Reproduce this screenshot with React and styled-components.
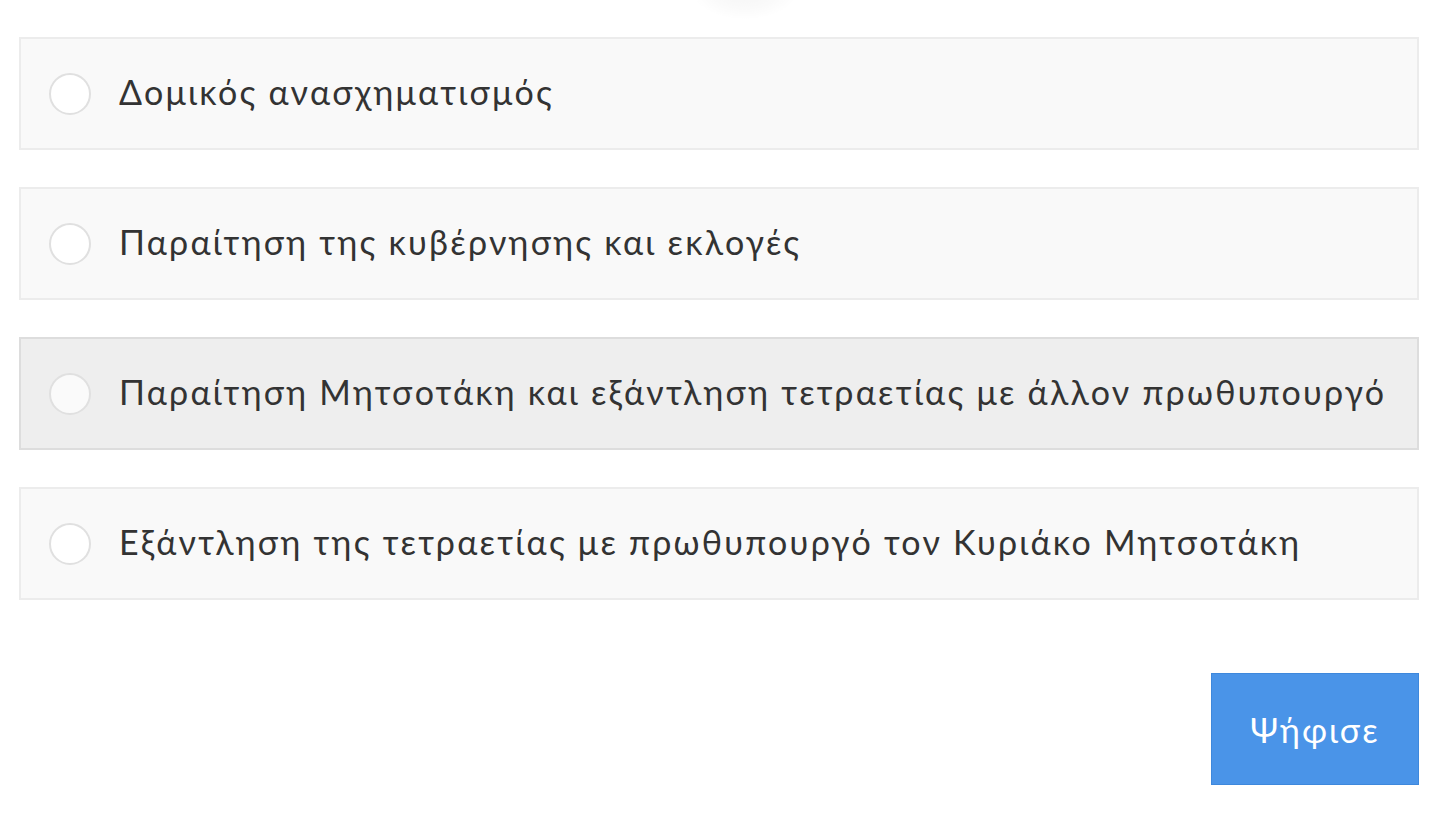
import styled, { createGlobalStyle } from "styled-components";

const GlobalStyle = createGlobalStyle`
  html, body {
    margin: 0;
    padding: 0;
    background: #fff;
  }
  body {
    font-family: "Lato", "Noto Sans", sans-serif;
    color: #333;
  }
`;

const Page = styled.div`
  position: relative;
  width: 1445px;
  height: 818px;
  overflow: hidden;
  padding: 37px 26px 0 19px;
  box-sizing: border-box;
`;

// soft shadow of an element that sits just above the visible area
const TopShadow = styled.div`
  position: absolute;
  left: 690px;
  top: -42px;
  width: 110px;
  height: 62px;
  border-radius: 50%;
  background: radial-gradient(ellipse at center, rgba(0, 0, 0, 0.045) 0%, rgba(0, 0, 0, 0.02) 45%, rgba(0, 0, 0, 0) 70%);
`;

const OptionList = styled.div`
  display: flex;
  flex-direction: column;
  gap: 37px;
`;

const Option = styled.label`
  display: flex;
  align-items: center;
  gap: 28px;
  height: 113px;
  box-sizing: border-box;
  padding: 0 0 0 28px;
  background: ${({ $active }) => ($active ? "#eeeeee" : "#f9f9f9")};
  border: 2px solid ${({ $active }) => ($active ? "#dddddd" : "#ececec")};
  cursor: pointer;
`;

const Radio = styled.span`
  flex: none;
  width: 42px;
  height: 42px;
  border-radius: 50%;
  background: ${({ $active }) => ($active ? "#fafafa" : "#ffffff")};
  border: 2px solid #e0e0e0;
  box-sizing: border-box;
`;

const OptionText = styled.span`
  font-size: 34px;
  line-height: 1;
  letter-spacing: 2.25px;
  color: #333;
  white-space: nowrap;
  margin-top: -4px;
`;

const Footer = styled.div`
  display: flex;
  justify-content: flex-end;
  margin-top: 73px;
`;

const VoteButton = styled.button`
  width: 208px;
  height: 112px;
  background: #4a94e8;
  border: 1px solid #3e88dc;
  color: #fff;
  font-family: "Lato", "Noto Sans", sans-serif;
  font-size: 34px;
  letter-spacing: 2px;
  cursor: pointer;
`;

const options = [
  "Δομικός ανασχηματισμός",
  "Παραίτηση της κυβέρνησης και εκλογές",
  "Παραίτηση Μητσοτάκη και εξάντληση τετραετίας με άλλον πρωθυπουργό",
  "Εξάντληση της τετραετίας με πρωθυπουργό τον Κυριάκο Μητσοτάκη",
];

export default function App() {
  return (
    <>
      <GlobalStyle />
      <Page>
        <TopShadow />
        <OptionList>
          {options.map((text, i) => (
            <Option key={text} $active={i === 2}>
              <Radio $active={i === 2} />
              <OptionText>{text}</OptionText>
            </Option>
          ))}
        </OptionList>
        <Footer>
          <VoteButton>Ψήφισε</VoteButton>
        </Footer>
      </Page>
    </>
  );
}
